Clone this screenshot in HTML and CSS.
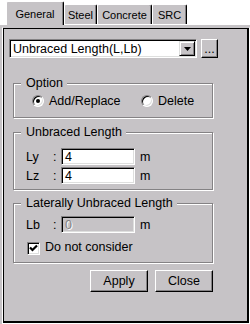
FILE: index.html
```html
<!DOCTYPE html>
<html>
<head>
    <title>Member Properties</title>
    <link rel="stylesheet" href="styles.css">
</head>
<body>
    <div class="tabs">
        <div class="tab tab-general active">General</div>
        <div class="tab tab-steel">Steel</div>
        <div class="tab tab-concrete">Concrete</div>
        <div class="tab tab-src">SRC</div>
    </div>

    <div class="page">
        <div class="frame">
            <div class="pick-row">
                <div class="combo">
                    <span class="combo-text">Unbraced Length(L,Lb)</span>
                    <span class="drop">
                        <svg width="7" height="4" viewBox="0 0 7 4"><path d="M0 0H7L3.5 4Z" fill="#000"/></svg>
                    </span>
                </div>
                <button class="btn more">...</button>
            </div>

            <fieldset class="group group-option">
                <legend>Option</legend>
                <div class="radios">
                    <label class="radio radio-add"><span class="dot checked"></span>Add/Replace</label>
                    <label class="radio"><span class="dot"></span>Delete</label>
                </div>
            </fieldset>

            <fieldset class="group group-length">
                <legend>Unbraced Length</legend>
                <div class="field">
                    <span class="field-name">Ly</span><span class="colon">:</span>
                    <div class="input">4</div>
                    <span class="unit">m</span>
                </div>
                <div class="field field-next">
                    <span class="field-name">Lz</span><span class="colon">:</span>
                    <div class="input">4</div>
                    <span class="unit">m</span>
                </div>
            </fieldset>

            <fieldset class="group group-lateral">
                <legend>Laterally Unbraced Length</legend>
                <div class="field">
                    <span class="field-name">Lb</span><span class="colon">:</span>
                    <div class="input disabled">0</div>
                    <span class="unit">m</span>
                </div>
                <label class="check-row">
                    <span class="check">
                        <svg width="9" height="9" viewBox="0 0 9 9"><path d="M1 3.5L3.5 6L8 1.5" fill="none" stroke="#000" stroke-width="2.2"/></svg>
                    </span>
                    Do not consider
                </label>
            </fieldset>

            <div class="actions">
                <button class="btn action">Apply</button>
                <button class="btn action">Close</button>
            </div>
        </div>
    </div>
</body>
</html>
```

FILE: styles.css
```css
body {
    margin: 0;
    width: 250px;
    height: 324px;
    overflow: hidden;
    background-color: #fff;
    font-family: "Liberation Sans", Arial, sans-serif;
    font-size: 12.5px;
    line-height: 14px;
    color: #000;
}
.tabs {
    display: flex;
    align-items: flex-end;
    height: 24px;
    padding-left: 6px;
    background-color: #fff;
}
.tab {
    box-sizing: border-box;
    height: 20px;
    padding-top: 4px;
    font-size: 11px;
    line-height: 13px;
    text-align: center;
    background-color: #c6c3c6;
    border-top: 1px solid #fff;
    border-left: 1px solid #fff;
    border-right: 1px solid #000;
    border-radius: 2px 2px 0 0;
    box-shadow: inset -1px 0 0 #848284;
}
.tab.active {
    position: relative;
    z-index: 1;
    height: 24px;
    margin-bottom: -1px;
    padding-top: 6px;
}
.tab-general { width: 58px; }
.tab-steel { width: 33px; }
.tab-concrete { width: 55px; }
.tab-src { width: 35px; }

.page {
    height: 300px;
    box-sizing: border-box;
    padding: 2px 0 0 2px;
    background-color: #c6c3c6;
    border-top: 1px solid #fff;
}
.frame {
    box-sizing: border-box;
    width: 248px;
    height: 297px;
    padding: 11px 0 0 6px;
    border: 1px solid #fff;
    border-top-color: #c6c3c6;
    box-shadow: inset 1px 1px 0 #000, inset -2px -2px 0 #000;
}
.pick-row {
    display: flex;
    align-items: flex-start;
    gap: 4px;
}
.combo {
    box-sizing: border-box;
    display: flex;
    align-items: center;
    width: 188px;
    height: 19px;
    padding: 1px 1px 1px 3px;
    background-color: #fff;
    border: 1px solid;
    border-color: #848284 #fff #fff #848284;
    box-shadow: inset 1px 1px 0 #000, inset -1px -1px 0 #dedfde;
}
.combo-text {
    flex-grow: 1;
    white-space: nowrap;
}
.drop {
    box-sizing: border-box;
    display: flex;
    align-items: center;
    justify-content: center;
    width: 16px;
    height: 15px;
    background-color: #c6c3c6;
    border: 1px solid;
    border-color: #dedfde #000 #000 #dedfde;
    box-shadow: inset 1px 1px 0 #fff, inset -1px -1px 0 #848284;
}
.btn {
    box-sizing: border-box;
    padding: 0;
    font-family: inherit;
    font-size: 12.5px;
    color: #000;
    background-color: #c6c3c6;
    border: 1px solid;
    border-color: #fff #000 #000 #fff;
    box-shadow: inset -1px -1px 0 #848284;
}
.more {
    width: 17px;
    height: 19px;
    line-height: 14px;
    padding-top: 1px;
}

.group {
    box-sizing: border-box;
    width: 200px;
    margin: 0 0 0 4px;
    padding: 0 0 0 7px;
    min-width: 0;
    border: 1px solid #848284;
    box-shadow: inset 1px 1px 0 #fff, 1px 1px 0 #fff;
}
.group legend {
    padding: 0 4px 0 5px;
    line-height: 14px;
    background-color: #c6c3c6;
}
.group-option {
    margin-top: 18px;
    padding-bottom: 9px;
}
.group-length {
    margin-top: 7px;
    padding-bottom: 5px;
}
.group-lateral {
    margin-top: 6px;
    padding-bottom: 8px;
}

.radios {
    display: flex;
    align-items: center;
    height: 14px;
    margin: 4px 0 0 11px;
}
.radio {
    display: flex;
    align-items: center;
}
.radio-add {
    width: 109px;
}
.dot {
    box-sizing: border-box;
    position: relative;
    width: 12px;
    height: 12px;
    margin-right: 5px;
    border-radius: 50%;
    background-color: #fff;
    border: 1px solid;
    border-color: #848284 #fff #fff #848284;
    box-shadow: inset 1px 1px 0 #000, inset -1px -1px 0 #dedfde;
}
.dot.checked::after {
    content: "";
    position: absolute;
    left: 3px;
    top: 3px;
    width: 4px;
    height: 4px;
    border-radius: 50%;
    background-color: #000;
}

.field {
    display: flex;
    align-items: center;
    height: 17px;
    margin: 9px 0 0 5px;
}
.group-lateral .field {
    margin-top: 6px;
}
.field-next {
    margin-top: 2px;
}
.field-name {
    width: 27px;
}
.colon {
    width: 8px;
}
.input {
    box-sizing: border-box;
    width: 74px;
    height: 17px;
    padding: 1px 0 0 3px;
    background-color: #fff;
    border: 1px solid;
    border-color: #848284 #fff #fff #848284;
    box-shadow: inset 1px 1px 0 #000, inset -1px -1px 0 #dedfde;
}
.input.disabled {
    background-color: #c6c3c6;
    color: #848284;
    text-shadow: 1px 1px 0 #fff;
}
.unit {
    margin-left: 5px;
}
.check-row {
    display: flex;
    align-items: center;
    height: 14px;
    margin: 7px 0 0 6px;
}
.check {
    box-sizing: border-box;
    display: flex;
    align-items: center;
    justify-content: center;
    width: 13px;
    height: 13px;
    margin: 2px 5px 0 0;
    background-color: #fff;
    border: 1px solid;
    border-color: #848284 #fff #fff #848284;
    box-shadow: inset 1px 1px 0 #000, inset -1px -1px 0 #dedfde;
}

.actions {
    display: flex;
    justify-content: flex-end;
    gap: 7px;
    width: 200px;
    margin: 7px 0 0 4px;
}
.action {
    width: 58px;
    height: 22px;
}
```
